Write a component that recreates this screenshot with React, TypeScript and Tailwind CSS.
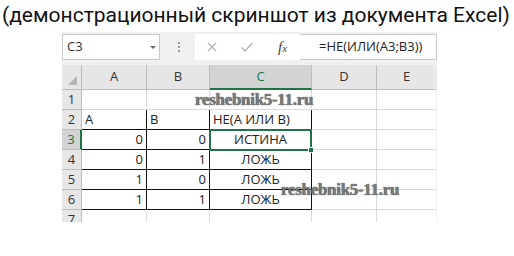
import React from "react";

const cols = ["A", "B", "C", "D", "E"];

type Cell = { v?: string; align?: "left" | "right" | "center"; boxed?: boolean };

const rows: Cell[][] = [
  [{}, {}, {}, {}, {}],
  [
    { v: "A", align: "left", boxed: true },
    { v: "B", align: "left", boxed: true },
    { v: "НЕ(А ИЛИ В)", align: "left", boxed: true },
    {},
    {},
  ],
  [
    { v: "0", align: "right", boxed: true },
    { v: "0", align: "right", boxed: true },
    { v: "ИСТИНА", align: "center", boxed: true },
    {},
    {},
  ],
  [
    { v: "0", align: "right", boxed: true },
    { v: "1", align: "right", boxed: true },
    { v: "ЛОЖЬ", align: "center", boxed: true },
    {},
    {},
  ],
  [
    { v: "1", align: "right", boxed: true },
    { v: "0", align: "right", boxed: true },
    { v: "ЛОЖЬ", align: "center", boxed: true },
    {},
    {},
  ],
  [
    { v: "1", align: "right", boxed: true },
    { v: "1", align: "right", boxed: true },
    { v: "ЛОЖЬ", align: "center", boxed: true },
    {},
    {},
  ],
  [{}, {}, {}, {}, {}],
];

const Watermark = ({ className }: { className: string }) => (
  <div
    className={
      "absolute font-['Liberation_Serif',serif] font-bold text-[17px] leading-none text-[#7a7a7a] [text-shadow:0_0_1px_#222] tracking-[-0.3px] " +
      className
    }
  >
    reshebnik5-11.ru
  </div>
);

export default function App() {
  return (
    <div className="w-[514px] h-[256px] bg-white overflow-hidden font-['Roboto',sans-serif]">
      <div className="h-[32px] pl-[2px] pt-[1px] text-[21px] leading-[28px] text-[#111] whitespace-nowrap">
        (демонстрационный скриншот из документа Excel)
      </div>

      <div className="relative ml-[62px] w-[375px] font-['Open_Sans','Noto_Sans',sans-serif] text-[13px] text-[#222]">
        {/* formula bar */}
        <div className="flex h-[33px] bg-[#f1f1f1] pt-[2px] pb-[5px]">
          <div className="flex w-[98px] items-center justify-between border border-[#c8c8c8] bg-white pl-[4px] pr-[3px]">
            <span className="text-[#333]">C3</span>
            <span className="h-0 w-0 border-x-[3px] border-t-[3px] border-x-transparent border-t-[#666]" />
          </div>
          <div className="ml-[3px] flex w-[32px] flex-col items-center justify-center gap-[2px]">
            <span className="h-[2px] w-[2px] bg-[#999]" />
            <span className="h-[2px] w-[2px] bg-[#999]" />
            <span className="h-[2px] w-[2px] bg-[#999]" />
          </div>
          <div className="flex w-[105px] items-center bg-white">
            <svg width="12" height="12" viewBox="0 0 12 12" className="ml-[11px]">
              <path d="M2 2 L10 10 M10 2 L2 10" stroke="#b0b0b0" strokeWidth="1.2" />
            </svg>
            <svg width="14" height="12" viewBox="0 0 14 12" className="ml-[22px]">
              <path d="M1.5 6.5 L5 10 L12.5 2" stroke="#b0b0b0" strokeWidth="1.3" fill="none" />
            </svg>
            <span className="ml-[24px] font-['Liberation_Serif',serif] italic text-[15px] text-[#444]">
              f<span className="text-[11px]">x</span>
            </span>
          </div>
          <div className="flex flex-1 items-center border border-l-0 border-[#c8c8c8] bg-white pl-[19px]">
            <span className="text-[13px] text-[#222]">=НЕ(ИЛИ(A3;B3))</span>
          </div>
        </div>

        {/* grid */}
        <div className="grid h-[157px] grid-cols-[20px_65px_63px_102px_65px_60px] grid-rows-[25px_20px_20px_20px_20px_20px_20px_20px] overflow-hidden">
          <div className="flex items-end justify-end border-r border-b border-[#bcbcbc] bg-[#e6e6e6] pb-[4px] pr-[4px]">
            <span className="h-0 w-0 border-l-[9px] border-b-[9px] border-l-transparent border-b-[#b5b5b5]" />
          </div>
          {cols.map((c) => (
            <div
              key={c}
              className={
                c === "C"
                  ? "flex items-center justify-center border-r border-b-2 border-r-[#bcbcbc] border-b-[#217346] bg-[#d3d3d3] text-[#217346]"
                  : "flex items-center justify-center border-r border-b border-[#bcbcbc] bg-[#e6e6e6] text-[#333]"
              }
            >
              {c}
            </div>
          ))}
          {rows.map((r, ri) => (
            <React.Fragment key={ri}>
              <div
                className={
                  ri === 2
                    ? "flex items-center justify-center border-r-2 border-b border-r-[#217346] border-b-[#bcbcbc] bg-[#d3d3d3] text-[#217346]"
                    : "flex items-center justify-center border-r border-b border-[#bcbcbc] bg-[#e6e6e6] text-[#333]"
                }
              >
                {ri + 1}
              </div>
              {r.map((cell, ci) => {
                const align =
                  cell.align === "right"
                    ? "justify-end pr-[3px]"
                    : cell.align === "center"
                    ? "justify-center"
                    : "justify-start pl-[3px]";
                const border = cell.boxed
                  ? "border-r border-b border-r-[#111] border-b-[#111]"
                  : "border-r border-b border-[#d9d9d9]";
                return (
                  <div key={ci} className={"flex items-center whitespace-nowrap " + align + " " + border}>
                    {cell.v}
                  </div>
                );
              })}
            </React.Fragment>
          ))}
        </div>

        {/* selection of C3 */}
        <div className="pointer-events-none absolute left-[147px] top-[97px] h-[22px] w-[103px] border-2 border-[#217346]">
          <span className="absolute -bottom-[4px] -right-[4px] h-[6px] w-[6px] border border-white bg-[#217346]" />
        </div>

        <Watermark className="left-[133px] top-[59px]" />
        <Watermark className="left-[219px] top-[149px]" />

        {/* fade on the right */}
        <div className="pointer-events-none absolute right-[-2px] top-[33px] h-[157px] w-[6px] bg-gradient-to-r from-transparent to-white" />
      </div>
    </div>
  );
}
